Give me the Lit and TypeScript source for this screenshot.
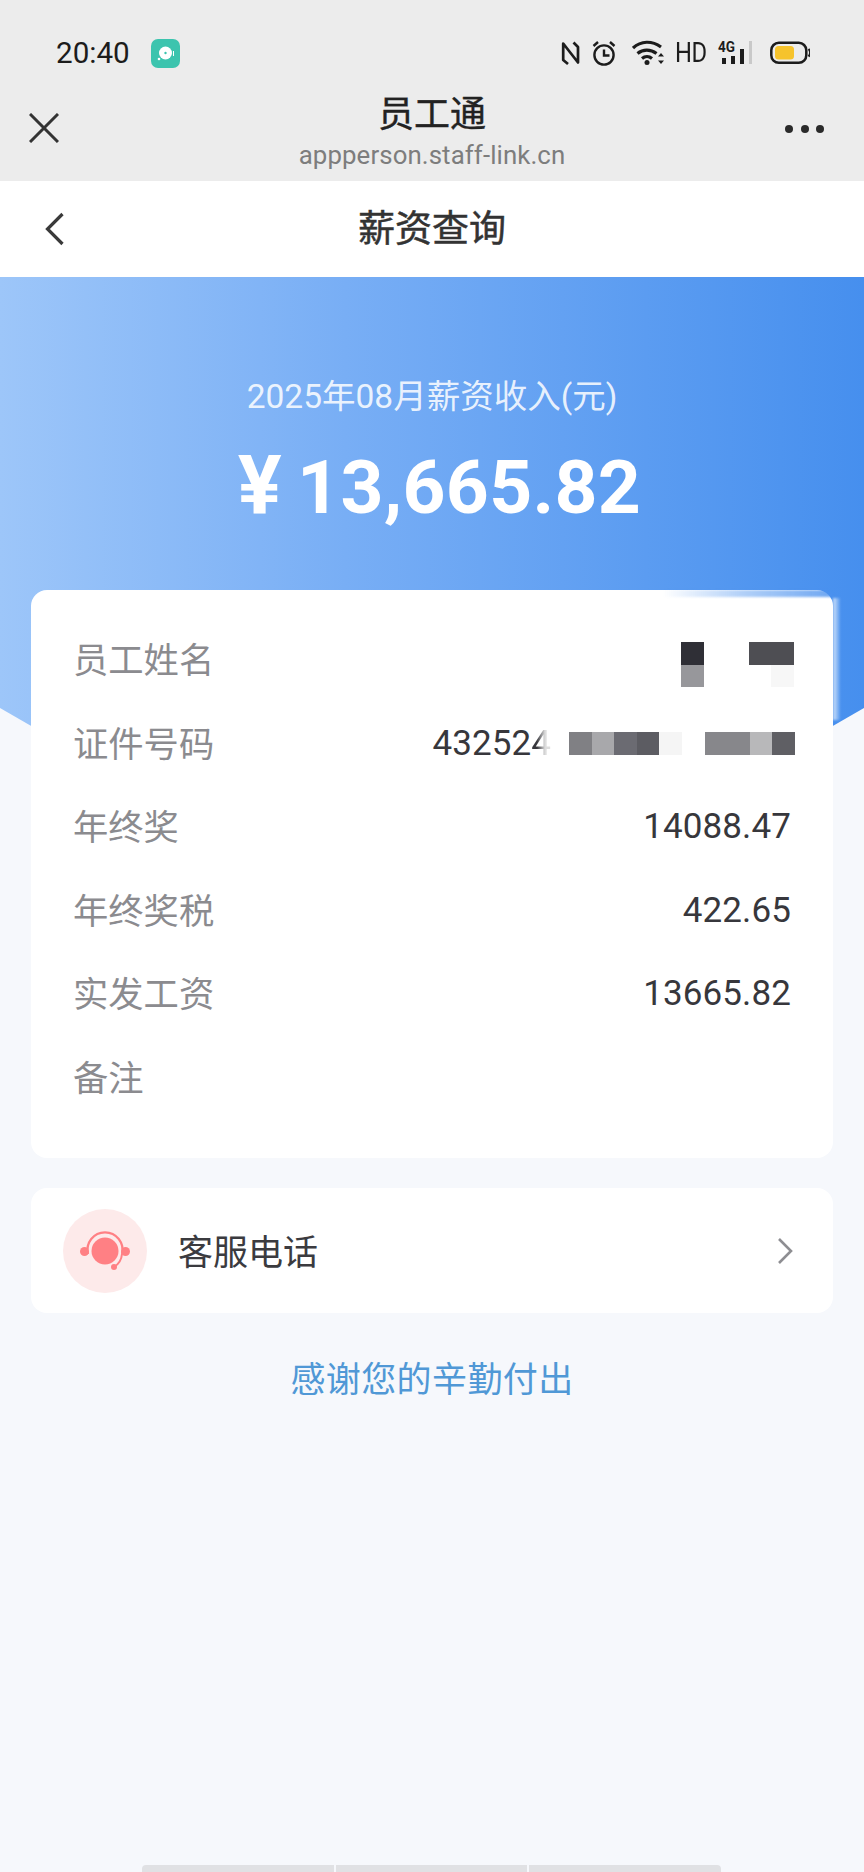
import { LitElement, html, css, svg } from "lit";
import { customElement } from "lit/decorators.js";

const NAME_CELLS = ["#2f2f36","#fff","#fff","#4e4e53","#4e4e53","#97979b","#fff","#fff","#fff","#f7f7f7"];
const ID_CELLS = ["#808084","#a8a8ab","#6b6b72","#5c5c62","#f5f5f5","#fff","#87878b","#87878b","#b8b8ba","#5f5f64"];

const rows = [
  { label: "年终奖", value: "14088.47" },
  { label: "年终奖税", value: "422.65" },
  { label: "实发工资", value: "13665.82" },
  { label: "备注", value: "" },
];

@customElement("app-root")
export class AppRoot extends LitElement {
  static styles = css`
    :host { display: flex; flex-direction: column; width: 864px; height: 1872px; overflow: hidden; position: relative;
      background: #f6f8fc; font-family: Roboto, "Noto Sans CJK SC", sans-serif; color: #333; }
    .top { background: #ececec; height: 181px; display: flex; flex-direction: column; flex: none; }
    .status { height: 88px; flex: none; padding: 36px 54px 0 56px; box-sizing: border-box; display: flex; align-items: flex-start; }
    .time { font-size: 29.6px; line-height: 34px; color: #1c1c1c; width: 95px; flex: none; }
    .appicon { width: 29px; height: 29px; border-radius: 7px; background: #3cc4ae; display: block; margin-top: 3px; flex: none; }
    .sicons { display: flex; align-items: center; margin-left: auto; height: 34px; }
    .sicons svg { display: block; flex: none; }
    .nfc { margin-right: 11px; }
    .alarm { margin-right: 16px; }
    .wifi { margin-right: 10px; }
    .signal { margin-right: 17px; }
    .hd { font-size: 27px; color: #1c1c1c; line-height: 34px; transform: scaleX(.88); width: 30px; margin: 0 12px 0 0; transform-origin: left center; letter-spacing: -.5px; }
    .bar { flex: 1; display: flex; align-items: flex-start; padding: 0 40px 0 29px; position: relative; }
    .close { width: 30px; height: 30px; margin-top: 25px; flex: none; display: block; }
    .heading { flex: 1; display: flex; flex-direction: column; align-items: center; margin-left: 10px; margin-right: -10px; }
    .heading b { font-weight: 400; font-size: 36px; line-height: 44px; color: #222; margin-top: 5px; -webkit-text-stroke: .4px #222; }
    .heading span { font-size: 25.8px; line-height: 30px; color: #7d7d7d; letter-spacing: .1px; margin-top: 3px; }
    .dots { display: flex; gap: 7.5px; margin-top: 37px; flex: none; }
    .dots i { width: 8px; height: 8px; border-radius: 50%; background: #2a2a2a; display: block; }
    .nav { height: 96px; background: #fff; flex: none; display: flex; align-items: center; padding-left: 45px; }
    .nav svg { width: 20px; height: 34px; display: block; flex: none; }
    .nav h1 { flex: 1; margin: 0 65px 6px 0; text-align: center; font-size: 37px; font-weight: 400; color: #333; -webkit-text-stroke: .5px #333; }
    .main { flex: 1; position: relative; display: flex; flex-direction: column; padding: 0 31px; }
    .hero { position: absolute; left: 0; right: 0; top: 0; height: 900px;
      background: linear-gradient(90deg, #9dc6f9 0%, #78aef5 40%, #468fee 100%);
      clip-path: polygon(0 0, 100% 0, 100% 431px, 50% 680px, 0 431px); }
    .herotext { position: relative; height: 313px; flex: none; display: flex; flex-direction: column; align-items: center; color: #fff; }
    .sub { font-size: 33.5px; line-height: 40px; margin-top: 100px; color: rgba(255,255,255,.86); }
    .amount { font-size: 75px; line-height: 90px; font-weight: 700; margin-top: 23px; margin-left: 15px; letter-spacing: .3px; display: flex; align-items: baseline; height: 90px; }
    .yen { margin-right: 15px; font-size: 82px; line-height: 90px; }
    .card { position: relative; background: #fff; border-radius: 16px; flex: none; }
    .info { height: 568px; box-sizing: border-box; padding: 28px 42px 0 43px; }
    .row { height: 83.5px; display: flex; align-items: center; justify-content: space-between; font-size: 35px; }
    .row .l { color: #8b8b8f; font-size: 35.3px; margin: 0 0 4px -1px; }
    .row .v { color: #37373c; letter-spacing: .1px; }
    .idv { display: flex; align-items: center; }
    .fade { background: linear-gradient(90deg, #37373c 30%, #ddd 70%); -webkit-background-clip: text; background-clip: text; color: transparent; }
    .mosaic { display: grid; grid-template-columns: repeat(5, 22.6px); grid-auto-rows: 22.5px; margin: 10px -3px 0 0; }
    .idm { display: flex; margin-left: 18px; margin-right: -4px; }
    .idm i { display: block; width: 22.6px; height: 22.5px; }
    .glow { position: absolute; right: 0; top: 0; width: 170px; height: 7px; border-radius: 0 16px 0 0;
      background: linear-gradient(90deg, rgba(90,155,240,0) 0%, rgba(90,155,240,.45) 45%, rgba(75,145,238,.8) 100%); filter: blur(1px); }
    .edge { position: absolute; left: 100%; top: 8px; width: 7px; height: 122px;
      background: linear-gradient(90deg, rgba(255,255,255,.75), rgba(255,255,255,.1)); filter: blur(1px); }
    .service { height: 125px; margin-top: 30px; display: flex; align-items: center; padding: 0 40px 0 32px; }
    .circle { width: 84px; height: 84px; border-radius: 50%; background: #fdeaea; display: flex; align-items: center; justify-content: center; flex: none; }
    .circle svg { width: 50px; height: 40px; display: block; }
    .service span { margin: 0 0 2px 31px; font-size: 35px; color: #3b3b3f; flex: 1; }
    .service .arrow { width: 16px; height: 28px; display: block; flex: none; }
    .thanks { position: relative; text-align: center; font-size: 35px; line-height: 44px; color: #5098d6; margin-top: 46px; letter-spacing: .4px; }
    .home { position: absolute; left: 142px; top: 1865px; width: 579px; height: 7px; display: flex; gap: 2px; }
    .home i { display: block; flex: 1; background: #e0e1e4; }
    .home i:first-child { border-radius: 4px 0 0 0; }
    .home i:last-child { border-radius: 0 4px 0 0; }
  `;

  private statusIcons() {
    return svg`
      <svg class="nfc" width="20" height="26" viewBox="0 0 20 26"><path d="M7 24 2.200 20V3.500L17 22.500V7L12.500 2.500" fill="none" stroke="#1c1c1c" stroke-width="2.700" stroke-linejoin="round"/></svg>
      <svg class="alarm" width="24" height="26" viewBox="0 0 24 26"><circle cx="12" cy="15" r="9.600" fill="none" stroke="#1c1c1c" stroke-width="2.400"/><path d="M12 9.500v6h5.500M1.500 6 6 2M22.500 6 18 2" fill="none" stroke="#1c1c1c" stroke-width="2.400"/></svg>
      <svg class="wifi" width="33" height="26" viewBox="0 0 33 26"><g fill="none" stroke="#1c1c1c" stroke-width="3.200"><path d="M1 8C9 .5 20 .5 29 7"/><path d="M5.500 13.500c5.500-4.500 13-4.500 19 0"/><path d="M10 18.500c3-2.500 7-2.500 10 0"/></g><circle cx="15" cy="22.500" r="2.500" fill="#1c1c1c"/><path d="M29 13l3 3.500h-6zM29 24l3-3.500h-6z" fill="#1c1c1c"/></svg>`;
  }
  private rightIcons() {
    return svg`
      <svg class="signal" width="36" height="26" viewBox="0 0 36 26"><text x="1" y="12" font-size="14" font-weight="700" font-family="Roboto" fill="#1c1c1c" textLength="17" lengthAdjust="spacingAndGlyphs">4G</text><rect x="5" y="18" width="4" height="6" fill="#1c1c1c"/><rect x="14" y="16" width="4" height="8" fill="#1c1c1c"/><rect x="23" y="9" width="4" height="15" fill="#1c1c1c"/><rect x="32" y="1" width="3" height="23" fill="#c9c9c9"/></svg>
      <svg width="40" height="24" viewBox="0 0 40 24"><rect x="1.300" y="1.800" width="35" height="20" rx="7.500" fill="none" stroke="#1c1c1c" stroke-width="2.500"/><rect x="5" y="5" width="19" height="13.500" rx="3.500" fill="#f6c32c"/><path d="M38.500 8a5 5 0 0 1 0 7.500" fill="none" stroke="#1c1c1c" stroke-width="2.200"/></svg>`;
  }

  render() {
    return html`
      <div class="top">
        <div class="status">
          <div class="time">20:40</div>
          <svg class="appicon" viewBox="0 0 29 29">
            <circle cx="14.500" cy="14" r="6.500" fill="#fff"/><circle cx="14.500" cy="14" r="1.200" fill="#3cc4ae"/>
            <circle cx="8" cy="20" r="1.300" fill="#fff"/><rect x="22" y="12" width="1" height="5" fill="#fff"/>
          </svg>
          <div class="sicons">
            ${this.statusIcons()}
            <div class="hd">HD</div>
            ${this.rightIcons()}
          </div>
        </div>
        <div class="bar">
          <svg class="close" viewBox="0 0 30 30"><path d="M1 1 29 29M29 1 1 29" fill="none" stroke="#333" stroke-width="3"/></svg>
          <div class="heading"><b>员工通</b><span>appperson.staff-link.cn</span></div>
          <div class="dots"><i></i><i></i><i></i></div>
        </div>
      </div>
      <div class="nav">
        <svg viewBox="0 0 20 34"><path d="M17.500 2 2.500 17l15 15" fill="none" stroke="#3a3a3a" stroke-width="3.200"/></svg>
        <h1>薪资查询</h1>
      </div>
      <div class="main">
        <div class="hero"></div>
        <div class="herotext">
          <div class="sub">2025年08月薪资收入(元)</div>
          <div class="amount"><span class="yen">¥</span>13,665.82</div>
        </div>
        <div class="card info">
          <div class="glow"></div>
          <div class="edge"></div>
          <div class="row"><span class="l">员工姓名</span>
            <div class="mosaic">${NAME_CELLS.map((c) => html`<i style="background:${c}"></i>`)}</div>
          </div>
          <div class="row"><span class="l">证件号码</span>
            <div class="v idv"><span>43252<span class="fade">4</span></span>
              <div class="idm">${ID_CELLS.map((c) => html`<i style="background:${c}"></i>`)}</div>
            </div>
          </div>
          ${rows.map((r) => html`<div class="row"><span class="l">${r.label}</span><span class="v">${r.value}</span></div>`)}
        </div>
        <div class="card service">
          <div class="circle">
            <svg viewBox="0 0 50 40">
              <circle cx="4.500" cy="20.500" r="4.500" fill="#ff8084"/>
              <circle cx="45.500" cy="20.500" r="4.500" fill="#ff8084"/>
              <circle cx="25" cy="20" r="13.500" fill="#ff8084"/>
              <path d="M8 23A17.500 17.500 0 1 1 42 23" fill="none" stroke="#ff8084" stroke-width="2.200"/>
              <path d="M42 23c-.5 6-3 10-8 13" fill="none" stroke="#ff8084" stroke-width="2"/>
              <circle cx="34" cy="36" r="3" fill="#ff8084"/>
            </svg>
          </div>
          <span>客服电话</span>
          <svg class="arrow" viewBox="0 0 16 28"><path d="M2 2 14 14 2 26" fill="none" stroke="#8e8e92" stroke-width="2.600"/></svg>
        </div>
        <div class="thanks">感谢您的辛勤付出</div>
      </div>
      <div class="home"><i></i><i></i><i></i></div>
    `;
  }
}
